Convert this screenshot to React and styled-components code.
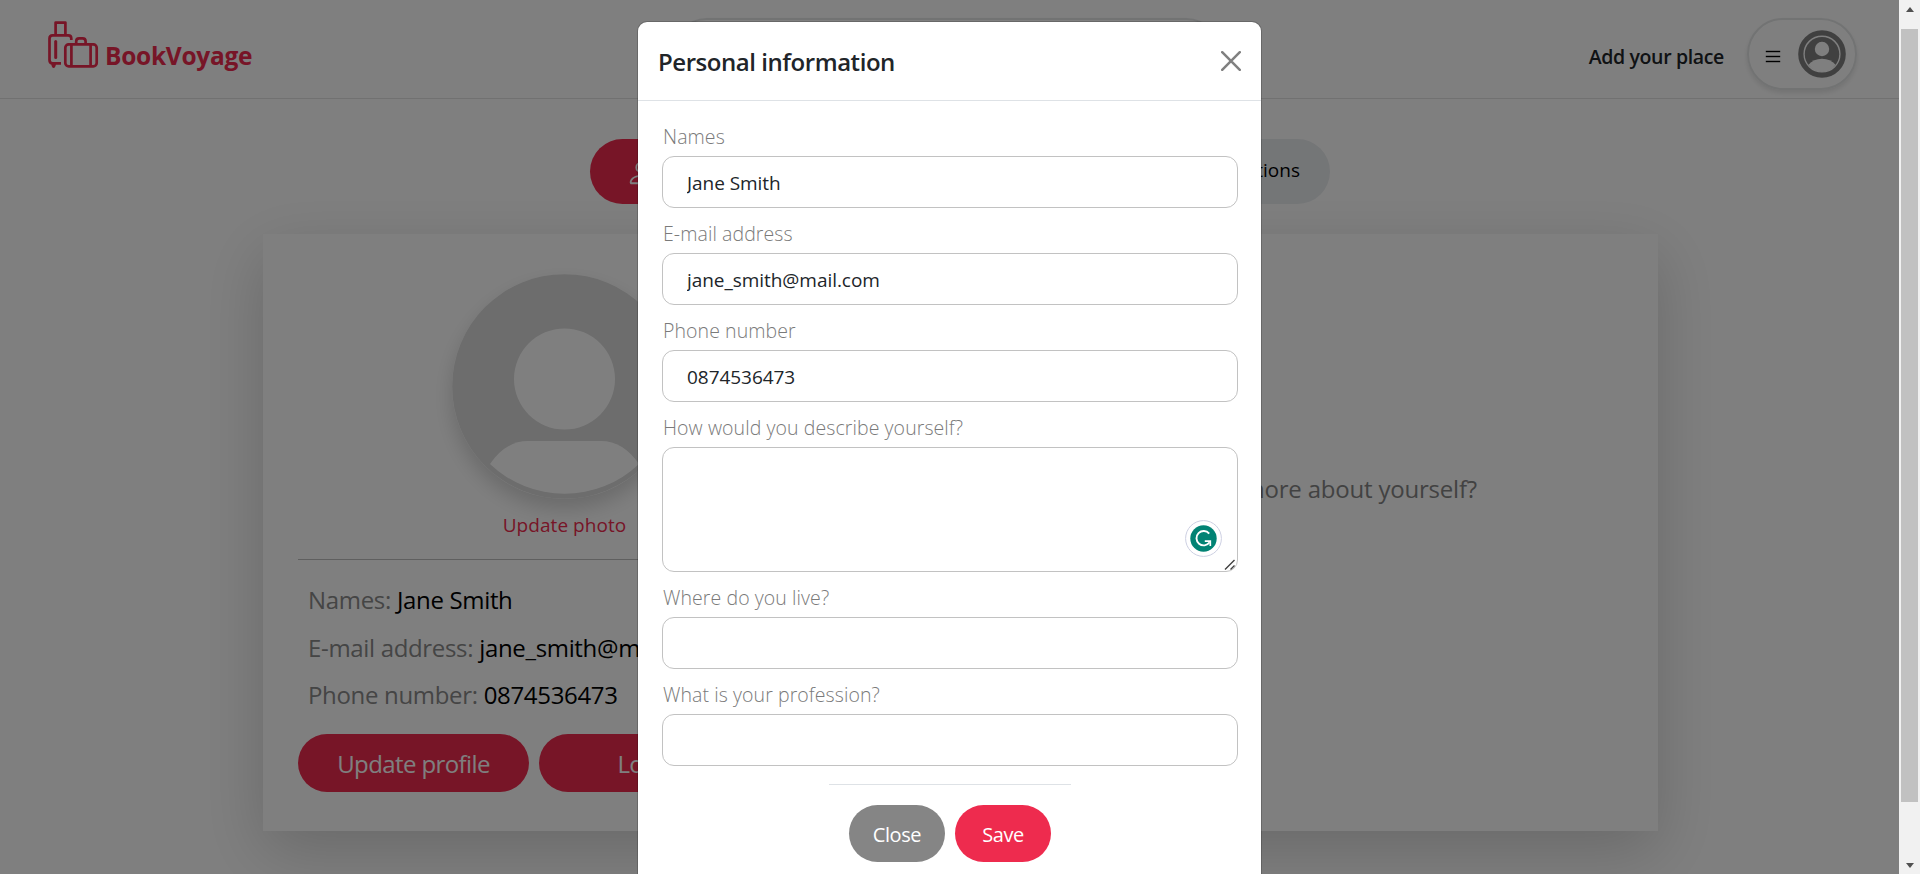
import React from "react";
import styled, { createGlobalStyle } from "styled-components";
import { BsPerson } from "react-icons/bs";

const RED = "#ee2b4e";

const GlobalStyle = createGlobalStyle`
  *, *::before, *::after { box-sizing: border-box; }
  html, body { margin: 0; height: 100%; overflow: hidden; }
  body {
    background: #fff;
    color: #000;
    font-family: "Open Sans", "Noto Sans", sans-serif;
    font-size: 19px;
    font-weight: 400;
    line-height: 30px;
  }
  button, input, textarea { font: inherit; }
`;

const Window = styled.div`
  position: relative;
  display: grid;
  grid-template-columns: 1899px 21px;
  height: 874px;
  overflow: hidden;
`;

const Page = styled.div`
  height: 874px;
  overflow: hidden;
`;

const Header = styled.header`
  display: grid;
  grid-template-columns: 623px 551px 1fr;
  align-items: start;
  height: 99px;
  padding: 18px 42px 0 48px;
  border-bottom: 1px solid #e2e2e2;
`;

const Brand = styled.a`
  display: flex;
  gap: 6px;
  color: ${RED};
  font-size: 24.5px;
  font-weight: 700;
  letter-spacing: -0.3px;
  line-height: 34px;

  svg { margin-top: 2px; }
  span { margin-top: 21px; }
`;

const Pill = styled.div`
  height: 72px;
  border: 2px solid #e4e6e7;
  border-radius: 36px;
  box-shadow: 0 3px 5px rgba(0, 0, 0, 0.1);
`;

const HeaderActions = styled.div`
  display: flex;
  justify-content: flex-end;
`;

const AddPlace = styled.a`
  margin: 24px 23px 0 0;
  color: #212529;
  font-size: 19.5px;
  font-weight: 600;
  letter-spacing: -0.35px;
`;

const UserMenu = styled(Pill)`
  display: flex;
  align-items: flex-start;
  width: 110px;
  padding: 10px 9px 0 17px;
  justify-content: space-between;
`;

const Burger = styled.span`
  display: flex;
  flex-direction: column;
  gap: 4px;
  width: 14px;
  margin-top: 21px;

  i { height: 1px; background: #000; box-shadow: 0 0 0 0.2px #000; }
`;

const Tabs = styled.nav`
  display: flex;
  gap: 20px;
  width: 740px;
  margin: 40px 0 30px 590px;
`;

const Tab = styled.a`
  display: flex;
  flex: 1;
  align-items: center;
  justify-content: ${(p) => (p.$active ? "flex-start" : "flex-end")};
  gap: 8px;
  height: 65px;
  padding: 0 30px 3px 36px;
  border-radius: 32.5px;
  background: ${(p) => (p.$active ? RED : "#e9ecef")};
  color: ${(p) => (p.$active ? "#fff" : "#000")};

  svg { margin-top: 5px; }
`;

const Card = styled.main`
  display: grid;
  grid-template-columns: 533px 1fr;
  width: 1395px;
  height: 597px;
  margin-left: 263px;
  padding: 40px 35px;
  box-shadow: 0 20px 60px rgba(0, 0, 0, 0.175);
`;

const Profile = styled.section`
  display: flex;
  flex-direction: column;
  align-items: center;
`;

const Photo = styled.div`
  width: 225px;
  height: 225px;
  border-radius: 50%;
  box-shadow: 0 10px 20px rgba(0, 0, 0, 0.17);

  svg { display: block; }
`;

const UpdatePhoto = styled.a`
  margin-top: 11px;
  color: ${RED};
  letter-spacing: 0.05px;
`;

const Details = styled.dl`
  width: 100%;
  margin: 19px 0 0;
  padding: 16px 10px 0;
  border-top: 1px solid #bfbfbf;
`;

const Detail = styled.div`
  display: flex;
  gap: 6px;
  height: 47.5px;
  font-size: 24px;
  line-height: 48px;
  letter-spacing: -0.33px;

  dt { color: #8a8a8a; }
  dd { margin: 0; color: #000; }
`;

const ProfileActions = styled.div`
  display: flex;
  gap: 10px;
  width: 100%;
  margin-top: 15px;
`;

const ProfileButton = styled.button`
  width: 231px;
  height: 58px;
  padding: 2px 0 0;
  border: 0;
  border-radius: 29px;
  background: ${RED};
  color: #fff;
  font-size: 24px;
  letter-spacing: -0.6px;
`;

const About = styled.section`
  padding: 200px 146px 0 0;
  color: #858585;
  font-size: 24px;
  letter-spacing: -0.2px;
  text-align: right;
  white-space: nowrap;
`;

const Backdrop = styled.div`
  position: absolute;
  inset: 0 21px 0 0;
  display: flex;
  justify-content: center;
  align-items: flex-start;
  padding-top: 21px;
  background: rgba(0, 0, 0, 0.5);
`;

const Dialog = styled.div`
  width: 625px;
  height: 920px;
  border: 1px solid rgba(0, 0, 0, 0.175);
  border-radius: 10px;
  background: #fff;
  background-clip: padding-box;
`;

const DialogHeader = styled.div`
  display: flex;
  align-items: center;
  justify-content: space-between;
  height: 79px;
  padding: 0 20px 0 20px;
  border-bottom: 1px solid #dee2e6;
`;

const DialogTitle = styled.h1`
  margin: 2px 0 0;
  color: #212529;
  font-size: 24px;
  font-weight: 600;
  letter-spacing: -0.45px;
`;

const CloseIcon = styled.button`
  width: 20px;
  height: 20px;
  padding: 0;
  border: 0;
  background: none;

  svg { display: block; }
`;

const Form = styled.form`
  display: flex;
  flex-direction: column;
  gap: 10px;
  padding: 20px 23px 0 24px;
`;

const Field = styled.label`
  position: relative;
  display: flex;
  flex-direction: column;
  gap: 5px;
`;

const Caption = styled.span`
  height: 30px;
  padding: 1px 0 0 1px;
  color: #7a7a7a;
  font-size: 19.5px;
  font-weight: 300;
  letter-spacing: 0.08px;
`;

const TextInput = styled.input`
  width: 576px;
  height: 52px;
  padding: 2px 24px 0;
  border: 1px solid #c2c2c2;
  border-radius: 12px;
  outline: 0;
  background: #fff;
  color: #212529;
  letter-spacing: -0.05px;
`;

const TextArea = styled.textarea`
  display: block;
  width: 576px;
  height: 125px;
  padding: 10px 24px;
  border: 1px solid #c2c2c2;
  border-radius: 12px;
  outline: 0;
  background: #fff;
  resize: none;
`;

const Checker = styled.span`
  position: absolute;
  right: 16px;
  bottom: 15px;
  display: flex;
  width: 37px;
  height: 37px;

  svg { display: block; }
`;

const Grip = styled.svg`
  position: absolute;
  right: 2px;
  bottom: 1px;
`;

const DialogFooter = styled.div`
  display: flex;
  justify-content: center;
  gap: 10px;
  width: 242px;
  margin: 18px 0 0 191px;
  padding-top: 20px;
  border-top: 1px solid #dee2e6;
`;

const DialogButton = styled.button`
  width: 96px;
  height: 57px;
  padding: 3px 0 0;
  border: 0;
  border-radius: 28.5px;
  background: ${(p) => (p.$primary ? RED : "#858585")};
  color: #fff;
  font-size: 20px;
  font-weight: 500;
  letter-spacing: -0.4px;
`;

const ScrollTrack = styled.div`
  display: flex;
  flex-direction: column;
  justify-content: space-between;
  align-items: center;
  padding: 7px 0 6px;
  background: #f1f1f1;
`;

const ScrollThumb = styled.div`
  width: 17px;
  height: 773px;
  margin: 17px 0 auto;
  background: #c1c1c1;
`;

const Arrow = styled.span`
  border: 4.5px solid transparent;
  border-top: ${(p) => (p.$up ? "0" : "5px solid #505050")};
  border-bottom: ${(p) => (p.$up ? "5px solid #505050" : "0")};
`;

function LuggageLogo() {
  return (
    <svg width="51" height="49" viewBox="0 0 51 49" fill="none" stroke="currentColor" strokeWidth="2.7" strokeLinejoin="round">
      <path d="M7.6 14.5V2.6H17.4V14.5" />
      <path d="M23.3 20V18.5Q23.3 15.4 20.2 15.4H4.6Q1.5 15.4 1.5 18.6V40Q1.5 43.4 4.6 43.4H13" />
      <path d="M7.7 21.5V37.5" strokeWidth="3" strokeLinecap="round" />
      <path d="M3.2 43.5Q3.6 47.9 5.6 48Q7.6 47.9 8 43.5Z" fill="currentColor" stroke="none" />
      <rect x="17.3" y="24.4" width="31.4" height="22" rx="3.4" />
      <path d="M23.4 24.4V46.4M42.6 24.4V46.4" />
      <path d="M28.2 24V21.4Q28.2 18.4 31.2 18.4H34.6Q37.6 18.4 37.6 21.4V24" />
    </svg>
  );
}

function UserBadge() {
  return (
    <svg width="48" height="48" viewBox="0 0 48 48">
      <circle cx="24" cy="24" r="21.2" fill="none" stroke="#808080" strokeWidth="5.2" />
      <circle cx="24" cy="24.2" r="17.2" fill="#808080" />
      <circle cx="24" cy="19" r="7.2" fill="#fff" />
      <path d="M10.4 34.8Q15.5 28.8 24 28.8T37.6 34.8Q32.4 42 24 42T10.4 34.8Z" fill="#fff" />
    </svg>
  );
}

function Avatar() {
  return (
    <svg width="225" height="225" viewBox="0 0 225 225">
      <circle cx="112.5" cy="112.5" r="112.3" fill="#dadada" />
      <circle cx="112.5" cy="105" r="50.5" fill="#fff" />
      <path d="M38 190Q54 167 76 167H149Q171 167 187 190A108 108 0 0 1 38 190Z" fill="#fff" />
    </svg>
  );
}

function CheckerBadge() {
  return (
    <svg width="37" height="37" viewBox="0 0 37 37">
      <circle cx="18.5" cy="18.5" r="17.9" fill="#fff" stroke="#cdd0e2" />
      <circle cx="18.5" cy="18.5" r="13.2" fill="#028374" />
      <path d="M24.2 13.6A7.2 7.2 0 1 0 24.6 22.3" fill="none" stroke="#fff" strokeWidth="1.9" />
      <path d="M19.8 21.2H25.3V26" fill="none" stroke="#fff" strokeWidth="1.7" />
    </svg>
  );
}

const details = [
  ["Names:", "Jane Smith"],
  ["E-mail address:", "jane_smith@mail.com"],
  ["Phone number:", "0874536473"],
];

export default function App() {
  return (
    <>
      <GlobalStyle />
      <Window>
        <Page>
          <Header>
            <Brand>
              <LuggageLogo />
              <span>BookVoyage</span>
            </Brand>
            <Pill />
            <HeaderActions>
              <AddPlace>Add your place</AddPlace>
              <UserMenu>
                <Burger><i /><i /><i /></Burger>
                <UserBadge />
              </UserMenu>
            </HeaderActions>
          </Header>
          <Tabs>
            <Tab $active><BsPerson size={30} />Profile</Tab>
            <Tab>Reservations</Tab>
          </Tabs>
          <Card>
            <Profile>
              <Photo><Avatar /></Photo>
              <UpdatePhoto>Update photo</UpdatePhoto>
              <Details>
                {details.map(([name, value]) => (
                  <Detail key={name}><dt>{name}</dt><dd>{value}</dd></Detail>
                ))}
              </Details>
              <ProfileActions>
                <ProfileButton>Update profile</ProfileButton>
                <ProfileButton>Logout</ProfileButton>
              </ProfileActions>
            </Profile>
            <About>Want to tell us more about yourself?</About>
          </Card>
        </Page>
        <ScrollTrack>
          <Arrow $up />
          <ScrollThumb />
          <Arrow />
        </ScrollTrack>
        <Backdrop>
          <Dialog>
            <DialogHeader>
              <DialogTitle>Personal information</DialogTitle>
              <CloseIcon type="button">
                <svg width="20" height="20" viewBox="0 0 20 20" stroke="#808080" strokeWidth="2.5" strokeLinecap="round">
                  <path d="M1.2 1.2L18.8 18.8M18.8 1.2L1.2 18.8" />
                </svg>
              </CloseIcon>
            </DialogHeader>
            <Form>
              <Field><Caption>Names</Caption><TextInput defaultValue="Jane Smith" /></Field>
              <Field><Caption>E-mail address</Caption><TextInput defaultValue="jane_smith@mail.com" /></Field>
              <Field><Caption>Phone number</Caption><TextInput defaultValue="0874536473" /></Field>
              <Field>
                <Caption>How would you describe yourself?</Caption>
                <TextArea />
                <Checker><CheckerBadge /></Checker>
                <Grip width="12" height="12" viewBox="0 0 12 12" stroke="#404040" strokeWidth="1.4">
                  <path d="M1 10.5L10.5 1M6.5 10.5L10.5 6.5" />
                </Grip>
              </Field>
              <Field><Caption>Where do you live?</Caption><TextInput /></Field>
              <Field><Caption>What is your profession?</Caption><TextInput /></Field>
            </Form>
            <DialogFooter>
              <DialogButton>Close</DialogButton>
              <DialogButton $primary>Save</DialogButton>
            </DialogFooter>
          </Dialog>
        </Backdrop>
      </Window>
    </>
  );
}
